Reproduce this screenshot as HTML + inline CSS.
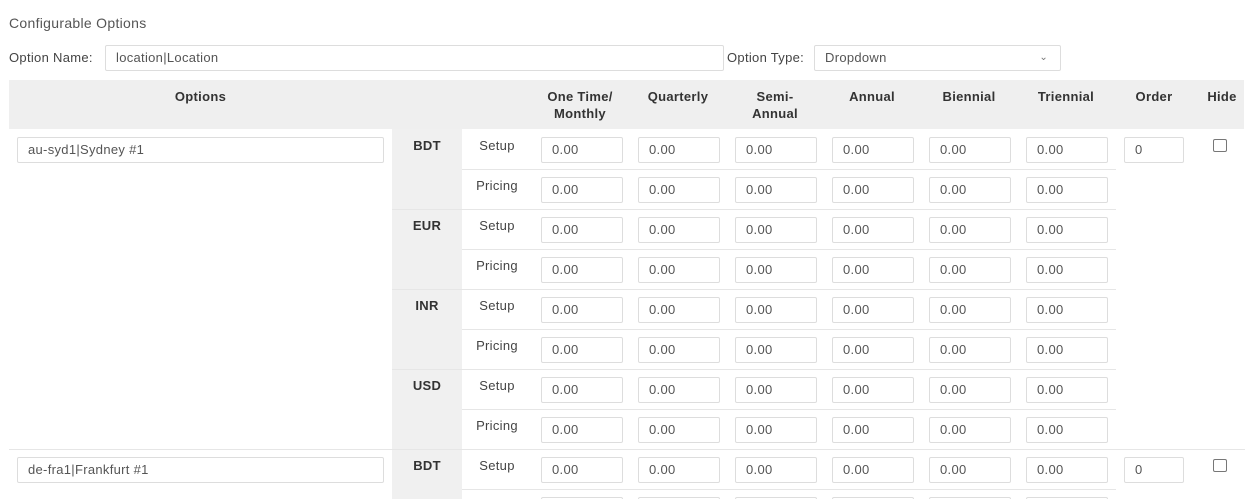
<!DOCTYPE html>
<html style="width:1253px;height:499px;overflow:hidden"><head><meta charset="utf-8"><style>
*{box-sizing:border-box;margin:0;padding:0}
body{width:1253px;height:499px;overflow:hidden;background:#fff;font-family:"Liberation Sans",sans-serif;font-size:13px;color:#444;position:relative;letter-spacing:0.3px}
.a{position:absolute}
.in{position:absolute;height:26px;border:1px solid #ddd;border-radius:2px;background:#fff;color:#555;padding-left:10px;line-height:24px;font-size:13px}
.row{position:absolute;left:0;width:1253px;height:40px}
.row .in{top:8px;width:82px}
.lbl{position:absolute;left:462px;width:70px;text-align:center;top:9px}
.cur{position:absolute;left:392px;width:70px;text-align:center;top:9px;font-weight:bold;color:#333}
.h{position:absolute;font-weight:bold;color:#333;text-align:center;line-height:17px}
.ln{position:absolute;height:1px;background:#e6e6e6}
.cb{position:absolute;left:1213px;top:10px;width:14px;height:13px;border:1.5px solid #777;border-radius:2px}
</style></head><body>
<div class="a" style="left:9px;top:15px;font-size:14px;color:#555">Configurable Options</div>
<div class="a" style="left:9px;top:50px;color:#444">Option Name:</div>
<div class="in" style="left:105px;top:45px;width:619px;height:26px">location|Location</div>
<div class="a" style="left:727px;top:50px">Option Type:</div>
<div class="in" style="left:814px;top:45px;width:247px;height:26px">Dropdown<span style="position:absolute;right:12px;top:0;font-size:10px;color:#777">&#8964;</span></div>

<div class="a" style="left:9px;top:80px;width:1235px;height:49px;background:#efefef"></div>
<div class="h" style="left:9px;width:383px;top:88px">Options</div>
<div class="h" style="left:532px;width:96px;top:88px">One Time/<br>Monthly</div>
<div class="h" style="left:630px;width:96px;top:88px">Quarterly</div>
<div class="h" style="left:727px;width:96px;top:88px">Semi-<br>Annual</div>
<div class="h" style="left:824px;width:96px;top:88px">Annual</div>
<div class="h" style="left:921px;width:96px;top:88px">Biennial</div>
<div class="h" style="left:1018px;width:96px;top:88px">Triennial</div>
<div class="h" style="left:1124px;width:60px;top:88px">Order</div>
<div class="h" style="left:1200px;width:44px;top:88px">Hide</div>

<div class="a" style="left:392px;top:129px;width:70px;height:370px;background:#f0f0f0"></div>

<div class="ln" style="left:462px;top:169px;width:654px"></div>
<div class="ln" style="left:392px;top:209px;width:724px"></div>
<div class="ln" style="left:462px;top:249px;width:654px"></div>
<div class="ln" style="left:392px;top:289px;width:724px"></div>
<div class="ln" style="left:462px;top:329px;width:654px"></div>
<div class="ln" style="left:392px;top:369px;width:724px"></div>
<div class="ln" style="left:462px;top:409px;width:654px"></div>
<div class="ln" style="left:9px;top:449px;width:1236px"></div>
<div class="ln" style="left:462px;top:489px;width:654px"></div>

<div class="in" style="left:17px;top:137px;width:367px">au-syd1|Sydney #1</div>
<div class="in" style="left:17px;top:457px;width:367px">de-fra1|Frankfurt #1</div>

<div class="row" style="top:129px"><div class="cur">BDT</div><div class="lbl">Setup</div>
<div class="in" style="left:541px">0.00</div><div class="in" style="left:638px">0.00</div><div class="in" style="left:735px">0.00</div><div class="in" style="left:832px">0.00</div><div class="in" style="left:929px">0.00</div><div class="in" style="left:1026px">0.00</div>
<div class="in" style="left:1124px;width:60px">0</div><div class="cb"></div></div>
<div class="row" style="top:169px"><div class="lbl">Pricing</div>
<div class="in" style="left:541px">0.00</div><div class="in" style="left:638px">0.00</div><div class="in" style="left:735px">0.00</div><div class="in" style="left:832px">0.00</div><div class="in" style="left:929px">0.00</div><div class="in" style="left:1026px">0.00</div></div>
<div class="row" style="top:209px"><div class="cur">EUR</div><div class="lbl">Setup</div>
<div class="in" style="left:541px">0.00</div><div class="in" style="left:638px">0.00</div><div class="in" style="left:735px">0.00</div><div class="in" style="left:832px">0.00</div><div class="in" style="left:929px">0.00</div><div class="in" style="left:1026px">0.00</div></div>
<div class="row" style="top:249px"><div class="lbl">Pricing</div>
<div class="in" style="left:541px">0.00</div><div class="in" style="left:638px">0.00</div><div class="in" style="left:735px">0.00</div><div class="in" style="left:832px">0.00</div><div class="in" style="left:929px">0.00</div><div class="in" style="left:1026px">0.00</div></div>
<div class="row" style="top:289px"><div class="cur">INR</div><div class="lbl">Setup</div>
<div class="in" style="left:541px">0.00</div><div class="in" style="left:638px">0.00</div><div class="in" style="left:735px">0.00</div><div class="in" style="left:832px">0.00</div><div class="in" style="left:929px">0.00</div><div class="in" style="left:1026px">0.00</div></div>
<div class="row" style="top:329px"><div class="lbl">Pricing</div>
<div class="in" style="left:541px">0.00</div><div class="in" style="left:638px">0.00</div><div class="in" style="left:735px">0.00</div><div class="in" style="left:832px">0.00</div><div class="in" style="left:929px">0.00</div><div class="in" style="left:1026px">0.00</div></div>
<div class="row" style="top:369px"><div class="cur">USD</div><div class="lbl">Setup</div>
<div class="in" style="left:541px">0.00</div><div class="in" style="left:638px">0.00</div><div class="in" style="left:735px">0.00</div><div class="in" style="left:832px">0.00</div><div class="in" style="left:929px">0.00</div><div class="in" style="left:1026px">0.00</div></div>
<div class="row" style="top:409px"><div class="lbl">Pricing</div>
<div class="in" style="left:541px">0.00</div><div class="in" style="left:638px">0.00</div><div class="in" style="left:735px">0.00</div><div class="in" style="left:832px">0.00</div><div class="in" style="left:929px">0.00</div><div class="in" style="left:1026px">0.00</div></div>
<div class="row" style="top:449px"><div class="cur">BDT</div><div class="lbl">Setup</div>
<div class="in" style="left:541px">0.00</div><div class="in" style="left:638px">0.00</div><div class="in" style="left:735px">0.00</div><div class="in" style="left:832px">0.00</div><div class="in" style="left:929px">0.00</div><div class="in" style="left:1026px">0.00</div>
<div class="in" style="left:1124px;width:60px">0</div><div class="cb"></div></div>
<div class="row" style="top:489px;height:10px;overflow:hidden">
<div class="in" style="left:541px"></div><div class="in" style="left:638px"></div><div class="in" style="left:735px"></div><div class="in" style="left:832px"></div><div class="in" style="left:929px"></div><div class="in" style="left:1026px"></div></div>
</body></html>
